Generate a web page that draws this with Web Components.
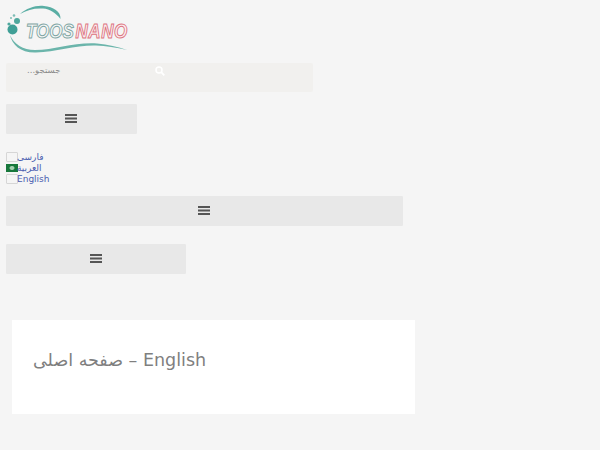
<!DOCTYPE html>
<html lang="fa">
<head>
<meta charset="utf-8">
<title>Toosnano</title>
<style>
  html, body { margin: 0; height: 100%; background: #f5f5f5; overflow: hidden; }
  body { font-family: "DejaVu Sans", sans-serif; padding: 0 0 0 6px; box-sizing: border-box; }
</style>
</head>
<body>
<site-logo></site-logo>
<search-bar placeholder="جستجو..."></search-bar>
<menu-toggle style="--w:130.5px;--top:12px"></menu-toggle>
<lang-list></lang-list>
<menu-toggle style="--w:396.5px;--top:12px"></menu-toggle>
<menu-toggle style="--w:179.5px;--top:18px"></menu-toggle>
<page-title>English – صفحه اصلی</page-title>
<script>
class SiteLogo extends HTMLElement {
  constructor() {
    super();
    this.attachShadow({mode: "open"}).innerHTML = `
      <style>
        :host { display: block; width: 136px; height: 63px; margin-left: -6px; }
        svg { display: block; }
        text { font: italic bold 17px "Liberation Sans", sans-serif; stroke-width: .85; }
      </style>
      <svg width="136" height="63" viewBox="0 0 136 63">
        <path d="M20 14C27 8 36 5 44 6C53 7 61 11 60.5 19C56 13 50 9 43 8.5C34 8 27 10 20 14Z" fill="#5aaea4"/>
        <path d="M10 35C14 44 23 50 35 50C55 50 75 42 97 43.5C108 44.5 118 47 127 50C116 47.500 106 46 96 45.5C76 45 56 52 36 52.5C21 53 12 45 10 35Z" fill="#6bb5ab"/>
        <circle cx="12.5" cy="29.5" r="5" fill="#3f9f96"/>
        <circle cx="17" cy="21" r="3" fill="#4fa79d"/>
        <circle cx="9" cy="24" r="1.6" fill="#4fa79d"/>
        <circle cx="14" cy="15.5" r="1.3" fill="#7dbdb5"/>
        <circle cx="11" cy="18" r="1" fill="#7dbdb5"/>
        <text transform="translate(26 37.5) scale(1 1.15)" fill="#f6f8f8" stroke="#7fa5a3">TOOS</text>
        <text transform="translate(75.5 37.5) scale(1 1.15)" fill="#fbeef0" stroke="#dd7480" letter-spacing=".6">NANO</text>
      </svg>`;
  }
}
customElements.define("site-logo", SiteLogo);

class SearchBar extends HTMLElement {
  constructor() {
    super();
    this.attachShadow({mode: "open"}).innerHTML = `
      <style>
        :host { display: block; width: 307px; height: 29px; background: #f1f0ee; border-radius: 2px; }
        .row { display: flex; align-items: center; height: 15px; }
        .ph { margin-left: 21px; width: 128px; font-size: 8.5px; color: #8a8a8a; direction: rtl; text-align: left; line-height: 15px; }
        svg { display: block; }
      </style>
      <div class="row">
        <div class="ph">${this.getAttribute("placeholder")}</div>
        <svg width="10" height="10" viewBox="0 0 10 10" fill="none" stroke="#fff"><circle cx="4" cy="4" r="3" stroke-width="1.5"/><path d="M6.2 6.2L9.3 9.3" stroke-width="1.8"/></svg>
      </div>`;
  }
}
customElements.define("search-bar", SearchBar);

class MenuToggle extends HTMLElement {
  constructor() {
    super();
    this.attachShadow({mode: "open"}).innerHTML = `
      <style>
        :host { display: flex; align-items: center; justify-content: center; width: var(--w); height: 30px; margin-top: var(--top); background: #e8e8e8; border-radius: 1px; }
        svg { display: block; position: relative; top: -.5px; }
      </style>
      <svg width="12" height="9" viewBox="0 0 12 9" fill="#555"><rect width="12" height="2"/><rect y="3.5" width="12" height="2"/><rect y="7" width="12" height="2"/></svg>`;
  }
}
customElements.define("menu-toggle", MenuToggle);

class LangList extends HTMLElement {
  constructor() {
    super();
    const items = [["فارسی", false], ["العربية", true], ["English", false]];
    this.attachShadow({mode: "open"}).innerHTML = `
      <style>
        :host { display: block; margin-top: 18px; font-size: 9px; line-height: 11px; color: #4a5db0; height: 32px; }
        .wrap { margin-top: -.5px; }
        .it { display: flex; height: 11px; align-items: center; }
        .fl { flex: none; box-sizing: border-box; width: 12px; height: 10px; border: 1px solid #d6d6d6; background: #f5f5f5; margin-right: -1px; border-radius: 1px; }
        .fl.sa { height: 8px; border: 0; border-radius: 0; background: radial-gradient(ellipse 3px 2.5px at 50% 50%, #a5cfb0 0 60%, #17773b 100%); }
      </style>
      <div class="wrap">
      ${items.map(([t, sa]) => `<div class="it"><span class="fl${sa ? " sa" : ""}"></span><span>${t}</span></div>`).join("")}
      </div>`;
  }
}
customElements.define("lang-list", LangList);

class PageTitle extends HTMLElement {
  constructor() {
    super();
    this.attachShadow({mode: "open"}).innerHTML = `
      <style>
        :host { display: block; box-sizing: border-box; width: 403px; height: 94px; margin: 46px 0 0 6px; background: #fff; padding: 27px 21px; }
        h1 { margin: 0; display: inline-block; direction: rtl; font-weight: 400; font-size: 17.5px; line-height: 26px; color: #7f7f7f; }
      </style>
      <h1><slot></slot></h1>`;
  }
}
customElements.define("page-title", PageTitle);
</script>
</body>
</html>
